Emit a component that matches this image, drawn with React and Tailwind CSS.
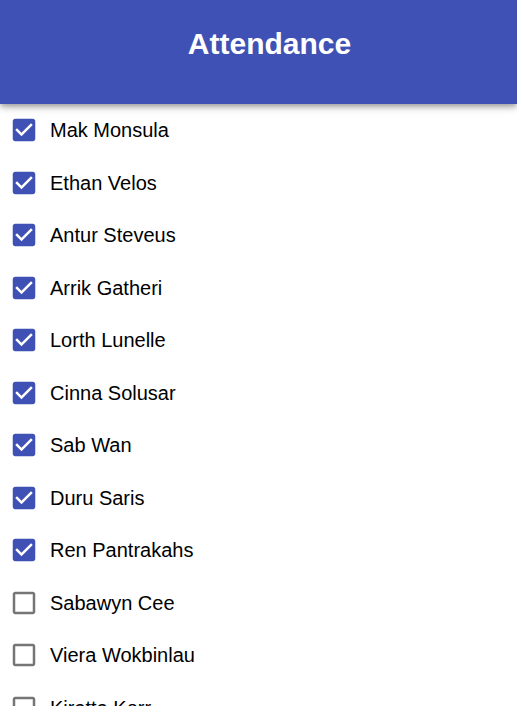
const students = [
  { name: "Mak Monsula", present: true },
  { name: "Ethan Velos", present: true },
  { name: "Antur Steveus", present: true },
  { name: "Arrik Gatheri", present: true },
  { name: "Lorth Lunelle", present: true },
  { name: "Cinna Solusar", present: true },
  { name: "Sab Wan", present: true },
  { name: "Duru Saris", present: true },
  { name: "Ren Pantrakahs", present: true },
  { name: "Sabawyn Cee", present: false },
  { name: "Viera Wokbinlau", present: false },
  { name: "Kiratta Kerr", present: false },
];

function Checkbox({ id, defaultChecked }) {
  return (
    <span className="relative grid size-[30px] shrink-0 place-items-center">
      <input
        id={id}
        type="checkbox"
        defaultChecked={defaultChecked}
        className="peer absolute inset-0 m-0 cursor-pointer opacity-0"
      />
      <svg viewBox="0 0 24 24" className="size-[30px] fill-[#757575] peer-checked:hidden" aria-hidden="true">
        <path d="M19 5v14H5V5h14m0-2H5c-1.1 0-2 .9-2 2v14c0 1.1.9 2 2 2h14c1.1 0 2-.9 2-2V5c0-1.1-.9-2-2-2z" />
      </svg>
      <svg viewBox="0 0 24 24" className="hidden size-[30px] fill-[#3f51b5] peer-checked:block" aria-hidden="true">
        <path d="M19 3H5c-1.11 0-2 .9-2 2v14c0 1.1.89 2 2 2h14c1.11 0 2-.9 2-2V5c0-1.1-.89-2-2-2zm-9 14l-5-5 1.41-1.41L10 14.17l7.59-7.59L19 8l-9 9z" />
      </svg>
    </span>
  );
}

export default function App() {
  return (
    <div className="flex h-screen flex-col bg-white font-['Liberation_Sans',Arial,sans-serif] text-black">
      <header className="z-10 shrink-0 bg-[#3f51b5] pt-6 pb-10 pl-[22px] text-center text-white shadow-[0_2px_5px_-1px_rgba(0,0,0,0.25),0_4px_6px_0_rgba(0,0,0,0.16),0_1px_12px_0_rgba(0,0,0,0.12)]">
        <h1 className="text-[30px] leading-[40px] font-bold">Attendance</h1>
      </header>
      <ul className="min-h-0 flex-1 overflow-y-auto px-[9px] [scrollbar-width:none]">
        {students.map((student, index) => (
          <li key={student.name} className="flex items-start gap-[11px] pt-[11px] odd:h-[53px] even:h-[52px]">
            <Checkbox id={`student-${index}`} defaultChecked={student.present} />
            <label htmlFor={`student-${index}`} className="cursor-pointer text-[20px] leading-[30px]">
              {student.name}
            </label>
          </li>
        ))}
      </ul>
    </div>
  );
}
